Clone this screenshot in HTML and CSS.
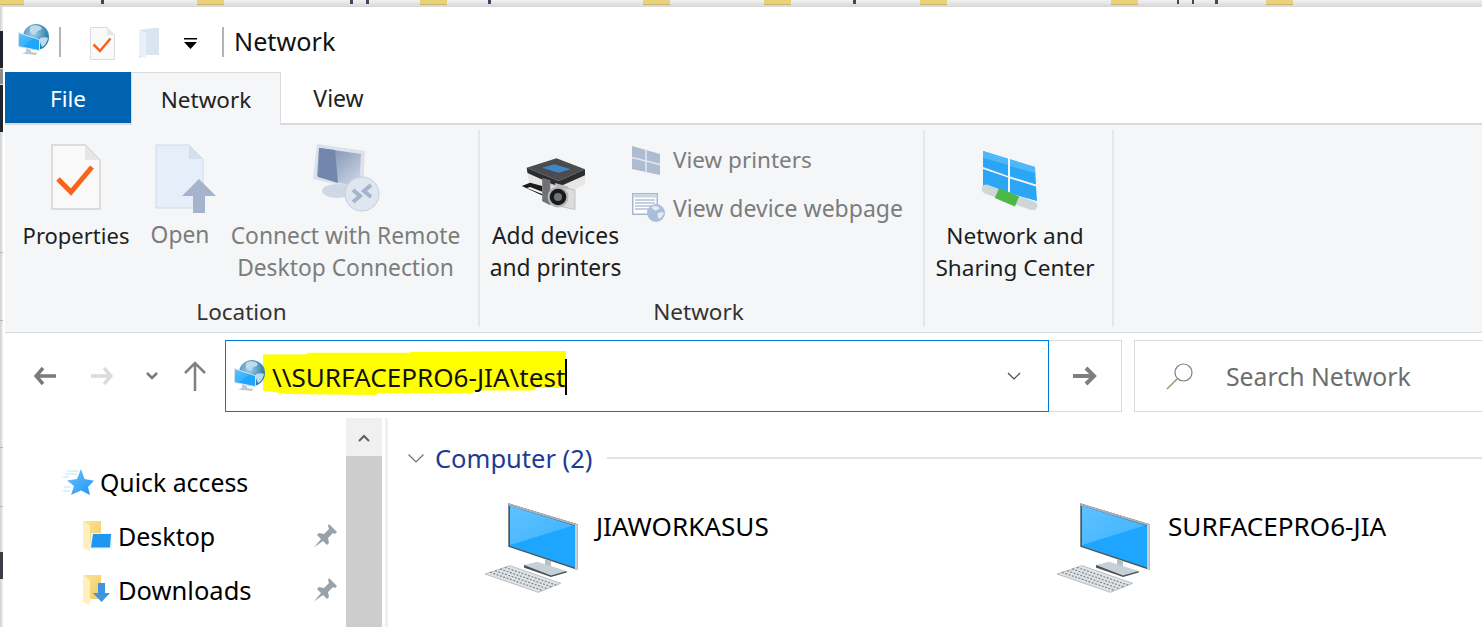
FILE: index.html
```html
<!DOCTYPE html>
<html lang="en">
<head>
<meta charset="utf-8">
<title>Network</title>
<link rel="stylesheet" href="styles.css">
</head>
<body>
<svg class="defs" width="0" height="0" aria-hidden="true">
  <defs>
    <linearGradient id="screen" x1="0" y1="0" x2="1" y2="1"><stop offset="0" stop-color="#5cc0fb"/><stop offset=".5" stop-color="#3bb0fb"/><stop offset=".5" stop-color="#20a7fd"/><stop offset="1" stop-color="#1ea4fc"/></linearGradient>
    <radialGradient id="globe" cx=".4" cy=".35" r=".8"><stop offset="0" stop-color="#a8d2ea"/><stop offset=".6" stop-color="#3d8cb5"/><stop offset="1" stop-color="#1f6a96"/></radialGradient>
    <linearGradient id="folderY" x1="0" y1="0" x2="1" y2="1"><stop offset="0" stop-color="#fbe59b"/><stop offset="1" stop-color="#f3c95e"/></linearGradient>
    <linearGradient id="rdp" x1="0" y1="0" x2="1" y2="1"><stop offset="0" stop-color="#6d83a8"/><stop offset="1" stop-color="#d6deea"/></linearGradient>
    <linearGradient id="starfill" x1="0" y1="0" x2="1" y2="1"><stop offset="0" stop-color="#6cc2ff"/><stop offset="1" stop-color="#1e96f5"/></linearGradient>
    <linearGradient id="screenLight" x1="0" y1="0" x2="1" y2="1"><stop offset="0" stop-color="#5fc2ff"/><stop offset="1" stop-color="#3db3ff"/></linearGradient>
    <symbol id="net" viewBox="0 0 31 32">
      <circle cx="18" cy="13" r="13" fill="url(#globe)"/>
      <path d="M12 3c4-3 9-2 12 1-1 3-5 2-6 5s-4 1-6-1zM22 14c3-1 6-1 8 0-1 4-3 8-6 9-1-3-3-6-2-9z" fill="#bcdcee"/>
      <path d="M0 8l22 7.500V27L0 23z" fill="#cfe3f1"/>
      <path d="M1 9.500l20 6.500v10L1 22z" fill="url(#screen)"/>
      <path d="M8 24.500l5 1.500v2l6 1-1 2-14-1.500 4-1.500z" fill="#bcc8d2"/>
    </symbol>
    <symbol id="pagecheck" viewBox="0 0 50 66">
      <path d="M1 1h33l15 15v49H1z" fill="#f9f9f9" stroke="#d2d2d2" stroke-width="1.500"/>
      <path d="M34 1l15 15H34z" fill="#e6e6e6"/>
      <path d="M7 35l13 13L41 23" fill="none" stroke="#f7631b" stroke-width="5"/>
    </symbol>
    <symbol id="pin" viewBox="0 0 24 24">
      <path d="M15 0l8 8-2 2-2-1-5 5 1 5-2 2L3 11l2-2 5 1 5-5-1-3zM7 15L0 23.500 9 17z" fill="#98a2a8"/>
    </symbol>
    <symbol id="pc" viewBox="0 0 94 92">
      <path d="M23.300.300l69.400 21V67L23.300 43.700z" fill="#4e5559"/>
      <path d="M23.300.300l69.400 21v2L23.300 2.500z" fill="#a9b2b9"/>
      <path d="M25 3l65 20v41.500L25 43z" fill="#1ea6ff"/>
      <path d="M25 3l63 19.500L25 42z" fill="url(#screenLight)"/>
      <path d="M90 22l2.700-.700V67H90z" fill="#c7d0d8"/>
      <path d="M60 56l6 2v8l-6-1z" fill="#b5c0c8"/>
      <path d="M39 62l13-3.300L81.700 68 66 73 39 65z" fill="#c5d0d8"/>
      <path d="M39 62v2.500L66 74l15.700-4.500V68L66 72.500z" fill="#4c5054"/>
      <path d="M0 71l25-8.300 50.700 17.600-22.400 9z" fill="#dfe3e6" stroke="#b9bfc3"/>
      <path d="M20 64.400l51.200 17.700M15 66l51.700 17.900M10 67.700l52.300 18M5 69.300l52.800 18.200" stroke="#808689" stroke-width="1.200" stroke-dasharray="2 1.500" fill="none"/>
    </symbol>
  </defs>
</svg>

<div class="topstrip">
  <i class="chip c1"></i><i class="tick t1"></i><i class="chip c2"></i><i class="tick t2"></i><i class="tick t3"></i><i class="chip c3"></i><i class="tick t4"></i><i class="chip c4"></i><i class="chip c5"></i><i class="tick t5"></i><i class="chip c6"></i><i class="chip c7"></i><i class="tick t6"></i><i class="tick t7"></i><i class="tick t8"></i><i class="chip c8"></i>
</div>

<div class="desk">
  <div class="edge"><i class="edge-a"></i><i class="edge-g"></i><i class="edge-b"></i><i class="edge-l l1"></i><i class="edge-l l2"></i><i class="edge-l l3"></i><i class="edge-l l4"></i><i class="edge-c"></i></div>
  <main class="window">
    <header class="titlebar">
      <svg class="ti-net"><use href="#net"/></svg>
      <span class="qsep first"></span>
      <svg class="ti-page"><use href="#pagecheck"/></svg>
      <svg class="ti-folder" viewBox="0 0 22 32"><path d="M1 2l14-2h6v27H8l-7 3z" fill="#dbe5f2"/><path d="M1 2l7 3v25l-7-3z" fill="#e9f0f9"/></svg>
      <svg class="ti-drop" viewBox="0 0 13 11"><path d="M0 0h13v1.500H0z" fill="#000"/><path d="M0 4h13L6.500 11z" fill="#000"/></svg>
      <span class="qsep second"></span>
      <h1 class="wintitle">Network</h1>
    </header>

    <nav class="tabs">
      <span class="tab file">File</span>
      <span class="tab current">Network</span>
      <span class="tab view">View</span>
    </nav>

    <section class="ribbon">
      <div class="group g-location">
        <div class="group-body">
          <div class="big props">
            <svg class="ico-page"><use href="#pagecheck"/></svg>
            <span class="big-label">Properties</span>
          </div>
          <div class="big off open">
            <svg class="ico-open" viewBox="0 0 62 70"><path d="M1 1h33l14 14v49H1z" fill="#e6eef9" stroke="#cfdbec"/><path d="M34 1l14 14H34z" fill="#d5e0ef"/><path d="M44 35l17 17H50v17H38V52H27z" fill="#a4b4cd"/></svg>
            <span class="big-label">Open</span>
          </div>
          <div class="big off rdp">
            <svg class="ico-rdp" viewBox="0 0 68 70"><path d="M5 1l48 7-2 40-50-12z" fill="#dbe2ec"/><path d="M7 5l42 6-2 34L5 33z" fill="url(#rdp)"/><path d="M23 7l3 33-20-6 2-29z" fill="#7287ab"/><ellipse cx="25" cy="48" rx="15" ry="7" fill="#cfd9e6"/><circle cx="50" cy="51" r="17" fill="#dfe6ef" stroke="#c3cfdf"/><path d="M41 47l7 6-7 6M59 42l-7 6 7 6" fill="none" stroke="#a4b4cd" stroke-width="4"/></svg>
            <span class="big-label">Connect with Remote<br>Desktop Connection</span>
          </div>
        </div>
        <div class="group-name">Location</div>
      </div>

      <div class="group g-network">
        <div class="group-body">
          <div class="big add">
            <svg class="ico-add" viewBox="0 0 66 55">
              <path d="M5.700 11.700L8 27l23 13 22-6 11-6V13.300z" fill="#e6e6e6"/>
              <path d="M5.700 11.700l31.800 13.300L64 13.300v6L37.500 31 6.500 17z" fill="#2b2c2e"/>
              <path d="M35.500 2.300L5.700 11.700 37.500 25 64 13.300z" fill="#4a4c4e"/>
              <path d="M21.200 11.700l12.300-3.400 16.300 5-12.300 3.400z" fill="#3f86c4"/>
              <path d="M.8 30L9 26.700 21.200 30v5.700L9 31l-3 1 15.200 6v1.500z" fill="#1b1b1b"/>
              <path d="M21.200 21.700l8.200 2.500v25.100l-8.200-4z" fill="#6f7175"/>
              <path d="M29.400 28.300L54 34v19.500L29.400 48.300z" fill="#dcdcdc" stroke="#b9b9b9" stroke-width=".8"/>
              <path d="M34 27l13 3.500 1 3-14-3.500z" fill="#b9b9b9"/>
              <circle cx="37" cy="41" r="10.500" fill="#b5b5b5"/>
              <circle cx="37" cy="41" r="8.300" fill="#1a1a1a"/>
              <circle cx="37" cy="41" r="4" fill="#6f757a"/>
            </svg>
            <span class="big-label">Add devices<br>and printers</span>
          </div>
          <div class="smalls">
            <div class="small off first-small">
              <svg class="ico-small" viewBox="0 0 28 29"><path d="M0 0l28 8v21L0 23z" fill="#aebcd1"/><path d="M14 3v24M0 11.500l28 7" stroke="#e4e9f1" stroke-width="1.500"/></svg>
              <span>View printers</span>
            </div>
            <div class="small off">
              <svg class="ico-small web" viewBox="0 0 34 30"><path d="M0 0h26v22H0z" fill="#a8b8d0"/><path d="M1.500 1.500h23v19h-23z" fill="#fff"/><path d="M1.500 1.500h23v3h-23z" fill="#c9d5e6"/><path d="M3 7h20M3 10h20M3 13h20M3 16h16" stroke="#b3c2d8" stroke-width="1.500"/><circle cx="24" cy="20" r="9" fill="#a9bedb"/><path d="M19 14c3-2 7-1 9 1-2 2-4 3-6 2zM26 20c2-1 5-1 6 0-1 3-3 5-5 6-1-2-2-4-1-6z" fill="#e3ebf5"/></svg>
              <span>View device webpage</span>
            </div>
          </div>
        </div>
        <div class="group-name net-name">Network</div>
      </div>

      <div class="group g-center">
        <div class="group-body">
          <div class="big center">
            <svg class="ico-center" viewBox="0 0 56 60">
              <path d="M1 1l25 7.700V26L1 17zM28 9.300L53 17l1 17.500-26-8zM1 19l25 8.500V43L1 36zM28 28.500l26 8L55 51l-27-7.500z" fill="#2ba6f6"/>
              <path d="M1 1l25 7.700v6L1 8zM28 9.300L53 17v6l-25-7z" fill="#4fb8fa"/>
              <path d="M4 39l47 17" stroke="#cfd6d9" stroke-width="9" stroke-linecap="round"/>
              <path d="M15 43l20 8.500" stroke="#4cb848" stroke-width="11"/>
            </svg>
            <span class="big-label">Network and<br>Sharing Center</span>
          </div>
        </div>
      </div>
    </section>

    <section class="addressbar">
      <svg class="nav-back" viewBox="0 0 22 18"><path d="M9 1L2 9l7 8M2 9h20" fill="none" stroke="#7a7a7a" stroke-width="3.500"/></svg>
      <svg class="nav-fwd" viewBox="0 0 22 18"><path d="M13 1l7 8-7 8M20 9H0" fill="none" stroke="#dcdcdc" stroke-width="3.500"/></svg>
      <svg class="nav-more" viewBox="0 0 12 8"><path d="M1 1l5 5 5-5" fill="none" stroke="#7a7a7a" stroke-width="2.500"/></svg>
      <svg class="nav-up" viewBox="0 0 22 30"><path d="M1 12L11 2l10 10M11 2v28" fill="none" stroke="#808080" stroke-width="2.500"/></svg>
      <div class="addr">
        <span class="highlight"></span>
        <svg class="addr-net"><use href="#net"/></svg>
        <span class="path">\\SURFACEPRO6-JIA\test</span>
        <span class="caret"></span>
        <svg class="addr-chev" viewBox="0 0 14 8"><path d="M1 1l6 6 6-6" fill="none" stroke="#444" stroke-width="1.200"/></svg>
      </div>
      <div class="go"><svg class="go-ico" viewBox="0 0 24 20"><path d="M13 2l8 8-8 8M21 10H0" fill="none" stroke="#7f7f7f" stroke-width="4"/></svg></div>
      <div class="search">
        <svg class="search-ico" viewBox="0 0 28 28"><circle cx="17.500" cy="10.500" r="8.500" fill="none" stroke="#7f7f7f" stroke-width="1.200"/><path d="M11 17L1 27" stroke="#a88c6e" stroke-width="1.500"/></svg>
        <span class="search-text">Search Network</span>
      </div>
    </section>

    <section class="content">
      <aside class="tree">
        <div class="tree-list">
          <div class="row root">
            <svg class="star" viewBox="0 0 32 27"><path d="M18 0l3.500 10 9.500 1.700-6 6.300 2 8-9-4.500-10 4.500 3-9-7-5.500 10-1.500z" fill="url(#starfill)"/><path d="M4 2h12M2 5h12M0 8h6M1 18h7M0 22h7" stroke="#bfe2fb" stroke-width="1"/></svg>
            <span class="root-text">Quick access</span>
          </div>
          <div class="row">
            <svg class="fold" viewBox="0 0 29 30"><path d="M0 0h18v24H0z" fill="url(#folderY)"/><path d="M0 0l7 5v25l-7-3z" fill="#fff0bd"/><path d="M8 12h21v16H7z" fill="#eaf6ff"/><path d="M10 13h18l-1 13.500H8z" fill="#1f97f2"/></svg>
            <span class="row-text desktop">Desktop</span>
            <svg class="pin"><use href="#pin"/></svg>
          </div>
          <div class="row">
            <svg class="fold" viewBox="0 0 29 30"><path d="M0 0h18v24H0z" fill="url(#folderY)"/><path d="M0 0l7 5v25l-7-3z" fill="#fff0bd"/><path d="M15 8h7v10h5L18.500 27 10 18h5z" fill="#3d94e0"/></svg>
            <span class="row-text">Downloads</span>
            <svg class="pin"><use href="#pin"/></svg>
          </div>
        </div>
        <div class="scroll">
          <div class="scroll-up"><svg class="scroll-chev" viewBox="0 0 12 8"><path d="M1 7l5-5 5 5" fill="none" stroke="#606060" stroke-width="2"/></svg></div>
          <div class="scroll-thumb"></div>
        </div>
      </aside>
      <div class="files">
        <div class="grouphead">
          <svg class="chev" viewBox="0 0 16 9"><path d="M.5.500L8 8 15.500.500" fill="none" stroke="#707070" stroke-width="1.200"/></svg>
          <span class="grouptitle">Computer (2)</span>
          <span class="rule"></span>
        </div>
        <div class="grid">
          <div class="pcitem">
            <svg class="pc"><use href="#pc"/></svg>
            <span>JIAWORKASUS</span>
          </div>
          <div class="pcitem last">
            <svg class="pc"><use href="#pc"/></svg>
            <span>SURFACEPRO6-JIA</span>
          </div>
        </div>
      </div>
    </section>
  </main>
</div>
</body>
</html>
```

FILE: styles.css
```css
* { box-sizing: border-box; }
html, body { margin: 0; height: 100%; }
body { width: 1482px; height: 627px; overflow: hidden; background: #fff; font-family: "Noto Sans", "Open Sans", sans-serif; font-size: 24px; color: #000; display: flex; flex-direction: column; }
.defs { position: absolute; }
svg { display: block; flex: none; }

.topstrip { height: 7px; flex: none; background: linear-gradient(#f1f1f1, #d6d6d6); position: relative; }
.chip { position: absolute; top: 0; width: 27px; height: 5px; background: #e8d27c; border-bottom: 1px solid #c9b465; }
.c1 { left: 0; width: 24px; } .c2 { left: 197px; } .c3 { left: 420px; } .c4 { left: 643px; } .c5 { left: 764px; } .c6 { left: 920px; } .c7 { left: 1111px; } .c8 { left: 1266px; }
.tick { position: absolute; top: 0; width: 3px; height: 4px; background: #3a4a66; }
.t1 { left: 101px; } .t2 { left: 350px; } .t3 { left: 366px; } .t4 { left: 488px; } .t5 { left: 853px; } .t6 { left: 1177px; width: 2px; } .t7 { left: 1192px; width: 2px; } .t8 { left: 1215px; }

.desk { flex: 1; display: flex; min-height: 0; }
.edge { width: 3px; flex: none; background: linear-gradient(90deg, #cfcfcf, #f2f2f2); position: relative; }
.edge i { position: absolute; left: 0; width: 3px; }
.edge-a { top: 24px; height: 37px; background: #20242e; }
.edge-g { top: 62px; height: 15px; background: #8a8d92; }
.edge-b { top: 78px; height: 47px; background: #20242e; }
.edge-c { top: 545px; height: 27px; background: #3a3d45; }
.edge-l { height: 1px; background: #b5b5b5; }
.l1 { top: 245px; } .l2 { top: 313px; } .l3 { top: 440px; } .l4 { top: 499px; }

.window { flex: 1; min-width: 0; display: flex; flex-direction: column; background: #fff; }

.titlebar { height: 65px; flex: none; display: flex; align-items: center; }
.ti-net { width: 31px; height: 32px; margin-left: 15px; }
.qsep { width: 2px; height: 30px; background: #b4b4b4; margin-top: 5px; }
.qsep.first { margin-left: 10px; }
.ti-page { width: 25px; height: 33px; margin-left: 29px; margin-top: 7px; }
.ti-folder { width: 22px; height: 32px; margin-left: 23px; margin-top: 8px; }
.ti-drop { width: 13px; height: 11px; margin-left: 24px; margin-top: 7px; }
.qsep.second { margin-left: 25px; }
.wintitle { margin: 0 0 0 10px; font-weight: 400; font-size: 25.200px; line-height: 32px; color: #111; position: relative; top: 1px; }

.tabs { height: 53px; flex: none; display: flex; align-items: stretch; margin-left: 2px; background: linear-gradient(#fff 51px, #d8dadd 51px); }
.tab { display: flex; align-items: center; justify-content: center; height: 52px; color: #222; font-size: 22.500px; }
.tab.file { width: 126px; height: 51px; background: #0063b1; color: #fff; padding-top: 2px; }
.tab.current { width: 150px; background: #f5f6f7; border: 1px solid #d9dbde; border-bottom: 0; height: 53px; }
.tab.view { width: 115px; font-size: 23px; }

.ribbon { height: 208px; flex: none; display: flex; margin-left: 2px; background: #f5f6f7; border-bottom: 1px solid #dadbdc; padding-top: 5px; align-items: flex-start; }
.group { height: 197px; border-right: 2px solid #e4e6e8; display: flex; flex-direction: column; flex: none; }
.g-location { width: 475px; }
.g-network { width: 445px; }
.g-center { width: 189px; }
.group-body { flex: 1; display: flex; min-height: 0; }
.group-name { height: 30px; text-align: center; font-size: 22.500px; line-height: 30px; color: #333; }
.net-name { padding-right: 6px; }
.big { display: flex; flex-direction: column; align-items: center; text-align: center; font-size: 22.800px; line-height: 32px; color: #1e1e1e; }
.big.off, .small.off { color: #7c7c7c; }
.props { margin-left: 18px; width: 106px; font-size: 22px; }
.open { margin-left: 22px; width: 58px; }
.rdp { margin-left: 22px; width: 229px; }
.ico-page { width: 50px; height: 66px; margin: 14px 0 9px; }
.ico-open { width: 62px; height: 70px; margin: 14px 0 5px 12px; }
.ico-rdp { width: 68px; height: 70px; margin: 13px 0 7px 1px; }
.big-label { display: block; white-space: nowrap; }
.add { margin-left: 11px; width: 129px; }
.ico-add { width: 66px; height: 55px; margin: 26px 4px 9px 0; }
.smalls { margin-left: 12px; padding-top: 15px; display: flex; flex-direction: column; gap: 18px; }
.small { display: flex; align-items: center; gap: 13px; font-size: 23px; line-height: 30px; white-space: nowrap; }
.small.first-small { font-size: 22.500px; }
.ico-small { width: 28px; height: 29px; }
.ico-small.web { width: 34px; height: 30px; margin-right: -6px; }
.center { width: 100%; padding-right: 7px; font-size: 22.600px; }
.ico-center { width: 56px; height: 60px; margin: 20px 10px 10px 0; }

.addressbar { height: 85px; flex: none; display: flex; align-items: center; padding-top: 1px; }
.nav-back { width: 22px; height: 18px; margin-left: 31px; }
.nav-fwd { width: 22px; height: 18px; margin-left: 35px; }
.nav-more { width: 12px; height: 8px; margin-left: 33px; }
.nav-up { width: 22px; height: 30px; margin-left: 26px; }
.addr { position: relative; width: 824px; height: 72px; margin-left: 19px; border: 1px solid #0078d7; display: flex; align-items: center; }
.addr-net { width: 31px; height: 32px; margin-left: 8px; position: relative; }
.highlight { position: absolute; left: 37px; top: 10px; width: 303px; height: 44px; background: #ffff00; clip-path: polygon(0 8%, 14% 8%, 15% 4%, 48% 4%, 49% 2%, 100% 0, 100% 84%, 90% 84%, 89% 90%, 70% 90%, 69% 96%, 38% 96%, 37% 100%, 8% 98%, 0 90%); }
.path { position: relative; margin-left: 7px; padding-top: 1px; font-size: 26.100px; color: #111; white-space: nowrap; }
.caret { position: relative; width: 2px; height: 36px; margin-top: 2px; background: #000; }
.addr-chev { width: 14px; height: 8px; margin-left: auto; margin-right: 27px; }
.go { width: 73px; height: 72px; border: 1px solid #dadada; border-left: 0; display: flex; align-items: center; justify-content: center; }
.go-ico { width: 24px; height: 20px; }
.search { flex: 1; height: 72px; margin-left: 12px; border: 1px solid #dadada; border-right: 0; display: flex; align-items: center; }
.search-ico { width: 28px; height: 28px; margin-left: 31px; }
.search-text { margin-left: 32px; color: #6d6d6d; font-size: 24.800px; white-space: nowrap; }

.content { flex: 1; min-height: 0; display: flex; }
.tree { width: 385px; flex: none; display: flex; padding-right: 3px; border-right: 3px solid #f0f0f0; }
.tree-list { width: 343px; flex: none; padding-top: 37px; padding-left: 60px; }
.row { height: 54px; display: flex; align-items: center; padding-left: 20px; position: relative; }
.row-text { margin-left: 6px; font-size: 25.500px; }
.row-text.desktop { font-size: 25px; }
.row.root { padding-left: 0; }
.root-text { margin-left: 5px; font-size: 24.800px; }
.star { width: 32px; height: 27px; }
.fold { width: 29px; height: 30px; }
.pin { position: absolute; right: 8px; width: 24px; height: 24px; }
.scroll { width: 36px; flex: none; display: flex; flex-direction: column; background: #cdcdcd; }
.scroll-up { height: 38px; padding-top: 2px; background: #f0f0f0; display: flex; align-items: center; justify-content: center; }
.scroll-chev { width: 12px; height: 8px; }
.scroll-thumb { flex: 1; }

.files { flex: 1; min-width: 0; padding-left: 20px; }
.grouphead { height: 40px; display: flex; align-items: center; margin-top: 20px; }
.chev { width: 16px; height: 9px; }
.grouptitle { margin-left: 11px; color: #1f3a93; font-size: 25.500px; white-space: nowrap; }
.rule { flex: 1; height: 2px; background: #e2e2e2; margin-left: 15px; }
.grid { display: flex; margin-top: 25px; padding-left: 77px; }
.pcitem { width: 572px; flex: none; display: flex; align-items: flex-start; font-size: 26.100px; }
.pcitem.last { width: auto; }
.pc { width: 94px; height: 92px; }
.pcitem span { margin-left: 17px; margin-top: 5px; }
```
